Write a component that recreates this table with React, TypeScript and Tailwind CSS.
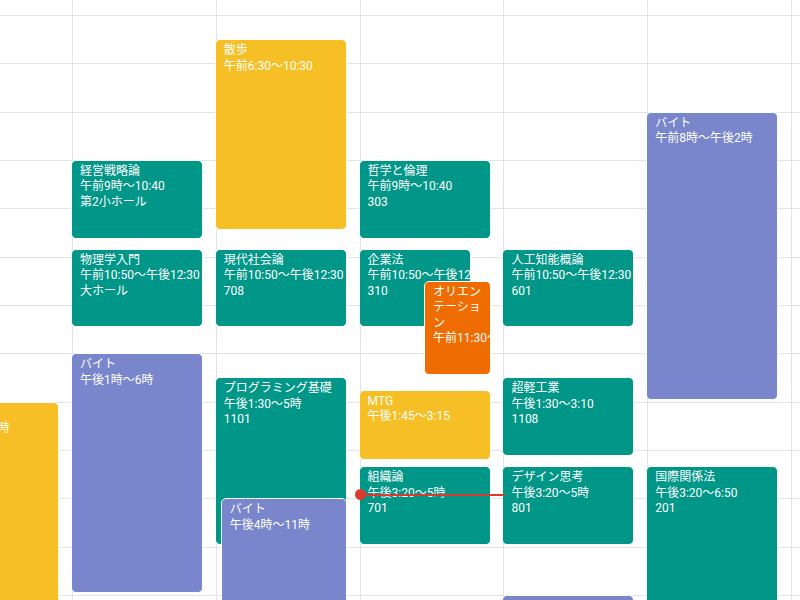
import { clsx } from "clsx"

// Week view, scrolled: first visible hour line (6:00) sits at y=15
const TOP = 15
const HOUR = 48.333
const COL = 143.8
const FIRST_LINE = 72

type Tone = "teal" | "yellow" | "lavender" | "orange"

interface CalEvent {
  col: number
  start: number
  end: number
  title: string
  lines: string[]
  tone: Tone
  offset?: number
  width?: number
}

const toneClass: Record<Tone, string> = {
  teal: "bg-[#009688]",
  yellow: "bg-[#f6bf26]",
  lavender: "bg-[#7986cb]",
  orange: "bg-[#ef6c00]",
}

const events: CalEvent[] = [
  { col: 0, start: 14, end: 19, title: "バイト", lines: ["午後2時〜7時"], tone: "yellow" },

  { col: 1, start: 9, end: 10 + 40 / 60, title: "経営戦略論", lines: ["午前9時〜10:40", "第2小ホール"], tone: "teal" },
  { col: 1, start: 10 + 50 / 60, end: 12.5, title: "物理学入門", lines: ["午前10:50〜午後12:30", "大ホール"], tone: "teal" },
  { col: 1, start: 13, end: 18, title: "バイト", lines: ["午後1時〜6時"], tone: "lavender" },

  { col: 2, start: 6.5, end: 10.5, title: "散歩", lines: ["午前6:30〜10:30"], tone: "yellow" },
  { col: 2, start: 10 + 50 / 60, end: 12.5, title: "現代社会論", lines: ["午前10:50〜午後12:30", "708"], tone: "teal" },
  { col: 2, start: 13.5, end: 17, title: "プログラミング基礎", lines: ["午後1:30〜5時", "1101"], tone: "teal" },
  { col: 2, start: 16, end: 23, title: "バイト", lines: ["午後4時〜11時"], tone: "lavender", offset: 6, width: 124 },

  { col: 3, start: 9, end: 10 + 40 / 60, title: "哲学と倫理", lines: ["午前9時〜10:40", "303"], tone: "teal" },
  { col: 3, start: 10 + 50 / 60, end: 12.5, title: "企業法", lines: ["午前10:50〜午後12:30", "310"], tone: "teal", width: 110 },
  { col: 3, start: 11.5, end: 13.5, title: "オリエンテーション", lines: ["午前11:30〜午後1:30"], tone: "orange", offset: 65.4, width: 65 },
  { col: 3, start: 13.75, end: 15.25, title: "MTG", lines: ["午後1:45〜3:15"], tone: "yellow" },
  { col: 3, start: 15 + 20 / 60, end: 17, title: "組織論", lines: ["午後3:20〜5時", "701"], tone: "teal" },

  { col: 4, start: 10 + 50 / 60, end: 12.5, title: "人工知能概論", lines: ["午前10:50〜午後12:30", "601"], tone: "teal" },
  { col: 4, start: 13.5, end: 15 + 10 / 60, title: "超軽工業", lines: ["午後1:30〜3:10", "1108"], tone: "teal" },
  { col: 4, start: 15 + 20 / 60, end: 17, title: "デザイン思考", lines: ["午後3:20〜5時", "801"], tone: "teal" },
  { col: 4, start: 18, end: 21, title: "バイト", lines: ["午後6時〜9時"], tone: "lavender" },

  { col: 5, start: 8, end: 14, title: "バイト", lines: ["午前8時〜午後2時"], tone: "lavender" },
  { col: 5, start: 15 + 20 / 60, end: 18 + 50 / 60, title: "国際関係法", lines: ["午後3:20〜6:50", "201"], tone: "teal" },
]

const rows = Array.from({ length: 14 }, (_, r) => r)
const cols = Array.from({ length: 7 }, (_, c) => c)

const yOf = (h: number) => TOP + (h - 6) * HOUR
const xOf = (c: number) => FIRST_LINE + (c - 1) * COL

function EventCard({ ev }: { ev: CalEvent }) {
  const left = xOf(ev.col) + (ev.offset ?? 0) - 1
  const width = (ev.width ?? 130) + 2
  const top = yOf(ev.start)
  const height = (ev.end - ev.start) * HOUR - 2

  return (
    <div
      className={clsx(
        "absolute overflow-hidden rounded-[5px] border border-white pl-2 pr-1 pt-[3px] text-[12px] leading-[15.5px] text-white",
        toneClass[ev.tone]
      )}
      style={{ left, top, width, height }}
    >
      <div className="break-all">{ev.title}</div>
      {ev.lines.map((line) => (
        <div key={line} className="whitespace-nowrap">
          {line}
        </div>
      ))}
    </div>
  )
}

export default function App() {
  return (
    <div className="relative h-[600px] w-[800px] overflow-hidden bg-white font-['Roboto','Noto_Sans_CJK_JP',sans-serif]">
      {/* Grid lines */}
      <div className="grid grid-cols-[72px_repeat(6,143.8px)] grid-rows-[15px_repeat(13,48.333px)]">
        {rows.map((r) =>
          cols.map((c) => (
            <div
              key={`${r}-${c}`}
              className={clsx(
                "border-[#e1e4eb]",
                r > 0 && "border-t",
                c > 0 && "border-l"
              )}
            />
          ))
        )}
      </div>

      {/* Events */}
      <div className="absolute inset-0">
        {events.map((ev, i) => (
          <EventCard key={i} ev={ev} />
        ))}

        {/* Current time */}
        <div className="absolute left-[355px] top-[489px] flex items-center">
          <div className="h-[11px] w-[11px] rounded-full bg-[#db3a2f]" />
          <div className="h-[2px] w-[139px] bg-[#db3a2f]" />
        </div>
      </div>
    </div>
  )
}
